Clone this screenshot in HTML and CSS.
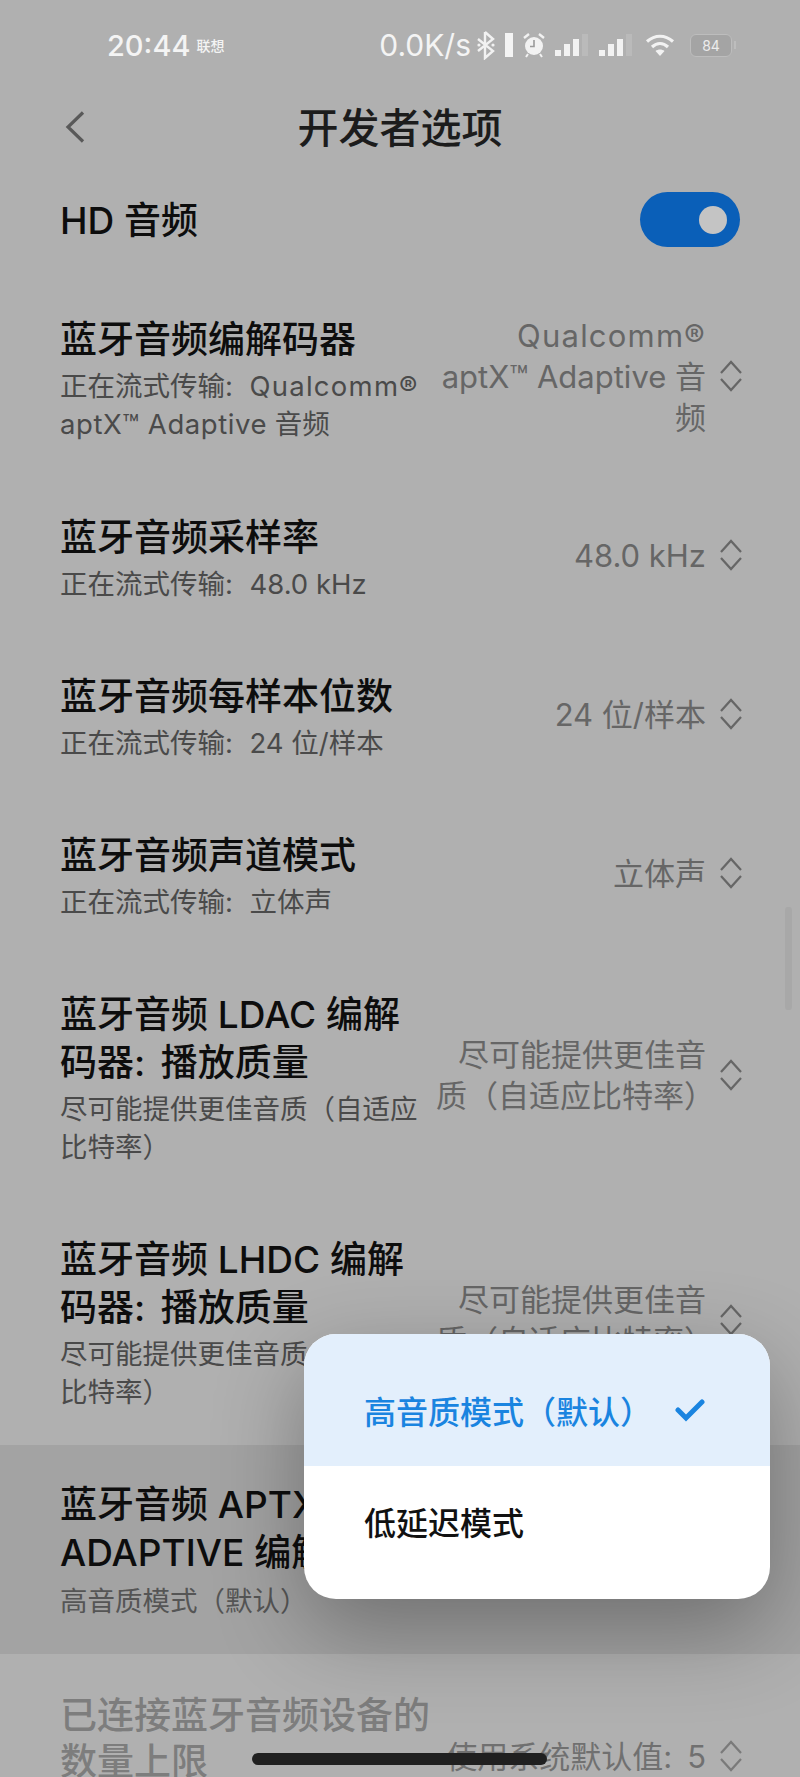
FILE: index.html
```html
<!DOCTYPE html>
<html lang="zh-CN">
<head>
<meta charset="utf-8">
<title>开发者选项</title>
<link rel="stylesheet" href="styles.css">
</head>
<body>
<div class="screen">
  <div class="status">
    <div class="status-left"><span class="clock">20:44</span><span class="carrier">联想</span></div>
    <div class="status-right">
      <span class="speed">0.0K/s</span>
      <svg class="ic-bt" viewBox="0 0 20 30"><path d="M9 2v26l8-7-15-12M9 2l8 7-15 12" fill="none" stroke="#f2f2f2" stroke-width="2.4"/><circle cx="3" cy="15" r="1.6" fill="#f2f2f2"/><circle cx="17" cy="15" r="1.6" fill="#f2f2f2"/></svg>
      <span class="ic-bar"></span>
      <svg class="ic-alarm" viewBox="0 0 22 26"><circle cx="11" cy="14" r="9" fill="#f2f2f2"/><path d="M11 8v6.500H7" fill="none" stroke="#9a9a9a" stroke-width="1.6"/><path d="M1 6l5-4M21 6l-5-4" stroke="#f2f2f2" stroke-width="2.4"/><path d="M5 22l-2 3M17 22l2 3" stroke="#f2f2f2" stroke-width="2"/></svg>
      <svg class="ic-sig" viewBox="0 0 34 24"><rect x="0" y="17" width="6" height="6" fill="#f2f2f2"/><rect x="9" y="11" width="6" height="12" fill="#f2f2f2"/><rect x="18" y="6" width="6" height="17" fill="#f2f2f2"/><rect x="27" y="1" width="6" height="22" fill="#bababa"/></svg>
      <svg class="ic-sig second" viewBox="0 0 34 24"><rect x="0" y="17" width="6" height="6" fill="#f2f2f2"/><rect x="9" y="11" width="6" height="12" fill="#f2f2f2"/><rect x="18" y="6" width="6" height="17" fill="#f2f2f2"/><rect x="27" y="1" width="6" height="22" fill="#bababa"/></svg>
      <svg class="ic-wifi" viewBox="0 0 30 24"><path d="M2 8.500c8-7 18-7 26 0M7 14c5-4.500 11-4.500 16 0" fill="none" stroke="#f2f2f2" stroke-width="3.200"/><path d="M15 23l-4.500-5c2.500-2 6.500-2 9 0z" fill="#f2f2f2"/></svg>
      <div class="battery"><span class="batt-num">84</span></div>
      <span class="batt-tip"></span>
    </div>
  </div>

  <div class="header">
    <svg class="back" viewBox="0 0 20 32"><path d="M18 1.500 3 16l15 14.500" fill="none" stroke="#595959" stroke-width="3.200"/></svg>
    <h1 class="page-title">开发者选项</h1>
  </div>

  <div class="switch-row">
    <span class="switch-label">HD 音频</span>
    <span class="toggle"><span class="knob"></span></span>
  </div>

  <div class="row">
    <div class="text"><div class="title">蓝牙音频编解码器</div><div class="sub">正在流式传输<span class="colon">:</span> <span class="wide">Qualcomm®</span> <span class="semi">aptX™ Adaptive</span> 音频</div></div>
    <div class="value"><span class="wide">Qualcomm®</span> <span class="semi">aptX™ Adaptive</span> 音频</div>
    <svg class="updown" viewBox="0 0 22 36"><path d="M1 15 11 4l10 11M1 21l10 11 10-11" fill="none" stroke="#666" stroke-width="2.200"/></svg>
  </div>
  <div class="row">
    <div class="text"><div class="title">蓝牙音频采样率</div><div class="sub">正在流式传输<span class="colon">:</span> 48.0 kHz</div></div>
    <div class="value">48.0 kHz</div>
    <svg class="updown" viewBox="0 0 22 36"><path d="M1 15 11 4l10 11M1 21l10 11 10-11" fill="none" stroke="#666" stroke-width="2.200"/></svg>
  </div>
  <div class="row">
    <div class="text"><div class="title">蓝牙音频每样本位数</div><div class="sub">正在流式传输<span class="colon">:</span> 24 位/样本</div></div>
    <div class="value">24 位/样本</div>
    <svg class="updown" viewBox="0 0 22 36"><path d="M1 15 11 4l10 11M1 21l10 11 10-11" fill="none" stroke="#666" stroke-width="2.200"/></svg>
  </div>
  <div class="row">
    <div class="text"><div class="title">蓝牙音频声道模式</div><div class="sub">正在流式传输<span class="colon">:</span> 立体声</div></div>
    <div class="value">立体声</div>
    <svg class="updown" viewBox="0 0 22 36"><path d="M1 15 11 4l10 11M1 21l10 11 10-11" fill="none" stroke="#666" stroke-width="2.200"/></svg>
  </div>
  <div class="row">
    <div class="text"><div class="title">蓝牙音频 LDAC 编解码器<span class="colon">:</span> 播放质量</div><div class="sub">尽可能提供更佳音质（自适应比特率）</div></div>
    <div class="value">尽可能提供更佳音质（自适应比特率）</div>
    <svg class="updown" viewBox="0 0 22 36"><path d="M1 15 11 4l10 11M1 21l10 11 10-11" fill="none" stroke="#666" stroke-width="2.200"/></svg>
  </div>
  <div class="row">
    <div class="text"><div class="title">蓝牙音频 LHDC 编解码器<span class="colon">:</span> 播放质量</div><div class="sub">尽可能提供更佳音质（自适应比特率）</div></div>
    <div class="value">尽可能提供更佳音质（自适应比特率）</div>
    <svg class="updown" viewBox="0 0 22 36"><path d="M1 15 11 4l10 11M1 21l10 11 10-11" fill="none" stroke="#666" stroke-width="2.200"/></svg>
  </div>
  <div class="row pressed">
    <div class="text"><div class="title">蓝牙音频 APTX ADAPTIVE 编解码器</div><div class="sub">高音质模式（默认）</div></div>
  </div>
  <div class="row disabled">
    <div class="text"><div class="title">已连接蓝牙音频设备的数量上限</div><div class="sub">使用系统默认值<span class="colon">:</span> 5</div></div>
    <div class="value">使用系统默认值<span class="colon">:</span> 5</div>
    <svg class="updown" viewBox="0 0 22 36"><path d="M1 15 11 4l10 11M1 21l10 11 10-11" fill="none" stroke="#7a7a7a" stroke-width="2.200"/></svg>
  </div>

  <div class="scrollbar"></div>

  <div class="popup">
    <div class="option selected"><span>高音质模式（默认）</span>
      <svg class="check" viewBox="0 0 30 24"><path d="M3 12l8 8L27 4" fill="none" stroke="#1a84e0" stroke-width="5" stroke-linecap="round"/></svg>
    </div>
    <div class="option plain">低延迟模式</div>
  </div>

  <div class="home-bar"></div>
</div>
</body>
</html>
```
FILE: styles.css
```css
* { box-sizing: border-box; }
html, body { margin: 0; padding: 0; }
body {
  width: 800px;
  height: 1777px;
  overflow: hidden;
  background: #b0b0b0;
  font-family: "Inter", "Noto Sans CJK SC", sans-serif;
  color: #0d0d0d;
}
.screen { position: relative; width: 800px; height: 1777px; overflow: hidden; }

.status {
  height: 90px;
  padding: 0 64px 0 107px;
  display: flex;
  align-items: center;
  justify-content: space-between;
  color: #f4f4f4;
}
.status-left { display: flex; align-items: center; }
.clock { font-size: 29px; font-weight: 500; }
.carrier { font-size: 14px; font-weight: 500; margin-left: 6px; }
.status-right { display: flex; align-items: center; }
.speed { font-size: 30px; }
.ic-bt { width: 20px; height: 30px; margin-left: 5px; }
.ic-bar { width: 8px; height: 24px; background: #f4f4f4; margin-left: 9px; }
.ic-alarm { width: 22px; height: 26px; margin-left: 10px; }
.ic-sig { width: 34px; height: 24px; margin-left: 10px; }
.ic-sig.second { margin-left: 10px; }
.ic-wifi { width: 32px; height: 24px; margin-left: 11px; }
.battery {
  width: 42px; height: 23px; margin-left: 14px;
  border: 1.5px solid #bdbdbd; border-radius: 6px;
  display: flex; align-items: center; justify-content: center;
  background: #a4a4a4;
}
.batt-num { font-size: 14px; color: #ececec; }
.batt-tip { width: 2px; height: 8px; margin-left: 2px; background: #bdbdbd; }

.header { position: relative; height: 70px; display: flex; align-items: center; justify-content: center; }
.back { position: absolute; left: 65px; top: 21px; width: 20px; height: 32px; }
.page-title { margin: 0; font-size: 41px; font-weight: 500; color: #1c1c1c; }

.switch-row {
  height: 119px;
  padding: 0 60px;
  display: flex;
  align-items: center;
  justify-content: space-between;
}
.switch-label { font-size: 37px; font-weight: 500; padding-bottom: 4px; }
.toggle {
  width: 100px; height: 55px; border-radius: 28px; background: #0a5fb8;
  display: flex; align-items: center; justify-content: flex-end; padding-right: 13px;
}
.knob { width: 28px; height: 28px; border-radius: 50%; background: #c4c4c4; }

.row {
  padding: 35.5px 58px 34.5px 60px;
  display: flex;
  align-items: center;
}
.text { width: 371px; flex: none; }
.title { font-size: 37px; line-height: 48px; font-weight: 500; }
.sub { font-size: 27.5px; line-height: 38px; margin-top: 3px; color: #4a4a4a; }
.colon { margin-right: 0.32em; }
.title .colon { margin-right: 0.15em; }
.value .colon { margin-right: 0.2em; }
.sub .wide { letter-spacing: 1.25px; }
.sub .semi { letter-spacing: 0.55px; }
.value {
  flex: 1;
  min-width: 0;
  margin: 0 0 6px 5px;
  font-size: 31px;
  line-height: 41px;
  text-align: right;
  color: #666;
}
.value .wide { letter-spacing: 1.2px; }
.updown { width: 22px; height: 36px; flex: none; margin: 0 0 6px 14px; }
.row.pressed { background: #a3a3a3; }
.row.pressed .text { width: 400px; }
.row.pressed .sub { color: #555; margin-top: 5px; }
.row.disabled { padding-top: 38.5px; }
.row.disabled .title { color: #7d7d7d; line-height: 46px; }
.row.disabled .sub { color: #8a8a8a; }
.row.disabled .value { color: #707070; }

.scrollbar {
  position: absolute; right: 8px; top: 907px;
  width: 7px; height: 103px; border-radius: 3px; background: #a8a8a8;
}

.popup {
  position: absolute; left: 304px; top: 1334px;
  width: 466px; height: 265px;
  border-radius: 32px;
  background: #fff;
  box-shadow: 0 30px 90px 0 rgba(0, 0, 0, 0.32);
}
.option {
  display: flex;
  align-items: center;
  justify-content: space-between;
  padding: 0 65px 0 60px;
  font-size: 32px;
  font-weight: 500;
  color: #111;
}
.option.selected {
  height: 132px;
  padding-top: 20px;
  background: #e3effc;
  color: #1a84e0;
  border-radius: 32px 32px 0 0;
}
.option.plain { height: 133px; padding-bottom: 24px; }
.check { width: 30px; height: 24px; }

.home-bar {
  position: absolute; left: 252px; top: 1753px;
  width: 295px; height: 12px; border-radius: 6px; background: #202020;
}
```
